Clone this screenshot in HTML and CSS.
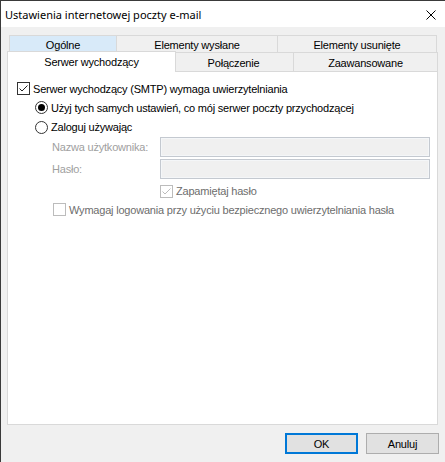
FILE: index.html
```html
<!DOCTYPE html>
<html lang="pl">
<head>
<meta charset="utf-8">
<title>Ustawienia internetowej poczty e-mail</title>
<link rel="stylesheet" href="styles.css">
</head>
<body>
<div class="window">
  <div class="titlebar">
    <span class="title">Ustawienia internetowej poczty e-mail</span>
    <svg class="close" width="10" height="10" viewBox="0 0 10 10"><path d="M0.5 0.5 L9.5 9.5 M9.5 0.5 L0.5 9.5" stroke="#000" stroke-width="1" fill="none"/></svg>
  </div>
  <div class="client">
    <div class="tabs">
      <div class="tabrow row1">
        <div class="tab hover w-ogolne">Ogólne</div>
        <div class="tab w-wyslane">Elementy wysłane</div>
        <div class="tab w-usuniete">Elementy usunięte</div>
      </div>
      <div class="tabrow row2">
        <div class="tab selected w-serwer">Serwer wychodzący</div>
        <div class="tab w-polaczenie">Połączenie</div>
        <div class="tab w-zaaw">Zaawansowane</div>
      </div>
    </div>
    <div class="panel">
      <div class="row r1">
        <span class="cb"><svg width="13" height="13" viewBox="0 0 13 13"><path d="M2.5 6.5 L5 9 L10.5 3.5" stroke="#222" stroke-width="1" fill="none"/></svg></span>
        <span class="lbl">Serwer wychodzący (SMTP) wymaga uwierzytelniania</span>
      </div>
      <div class="row r2 indent-radio">
        <span class="radio on"><span class="dot"></span></span>
        <span class="lbl">Użyj tych samych ustawień, co mój serwer poczty przychodzącej</span>
      </div>
      <div class="row r3 indent-radio">
        <span class="radio"></span>
        <span class="lbl">Zaloguj używając</span>
      </div>
      <div class="row r4 indent-field">
        <span class="flabel">Nazwa użytkownika:</span>
        <span class="input"></span>
      </div>
      <div class="row r5 indent-field">
        <span class="flabel">Hasło:</span>
        <span class="input"></span>
      </div>
      <div class="row r6 indent-remember">
        <span class="cb disabled"><svg width="13" height="13" viewBox="0 0 13 13"><path d="M2.5 6.5 L5 9 L10.5 3.5" stroke="#bcbcbc" stroke-width="1" fill="none"/></svg></span>
        <span class="lbl gray">Zapamiętaj hasło</span>
      </div>
      <div class="row r7 indent-spa">
        <span class="cb disabled"></span>
        <span class="lbl gray">Wymagaj logowania przy użyciu bezpiecznego uwierzytelniania hasła</span>
      </div>
    </div>
    <div class="buttons">
      <div class="btn default">OK</div>
      <div class="btn">Anuluj</div>
    </div>
  </div>
</div>
</body>
</html>
```

FILE: styles.css
```css
html, body {
  margin: 0;
  padding: 0;
  background: #f0f0f0;
}
body {
  font-family: "Liberation Sans", Arial, sans-serif;
  font-size: 11px;
  letter-spacing: -0.2px;
  color: #000;
}
.window {
  width: 445px;
  height: 462px;
  box-sizing: border-box;
  border-left: 1px solid #3a3a3a;
  border-top: 1px solid #3a3a3a;
  background: #f0f0f0;
  overflow: hidden;
}
.titlebar {
  height: 26px;
  background: #fff;
  display: flex;
  align-items: center;
  justify-content: space-between;
  padding: 0 9px 0 4px;
}
.title {
  font-family: "Noto Sans", "Open Sans", sans-serif;
  font-size: 11px;
  letter-spacing: 0;
  color: #000;
}
.close {
  display: block;
  margin-top: 1px;
}
.client {
  padding-top: 8px;
}
.tabs {
  margin-left: 6px;
}
.tabrow {
  display: flex;
  align-items: flex-start;
}
.row1 {
  padding-left: 2px;
}
.row2 {
  padding-left: 2px;
  margin-top: -1px;
}
.tab {
  box-sizing: border-box;
  border: 1px solid #d9d9d9;
  background: #f0f0f0;
  display: flex;
  align-items: center;
  justify-content: center;
  white-space: nowrap;
  margin-left: -1px;
}
.tab:first-child {
  margin-left: 0;
}
.row1 .tab {
  height: 18px;
  padding-top: 1px;
}
.row2 .tab {
  height: 19px;
  border-bottom: none;
  padding-top: 2px;
}
.tab.hover {
  background: #d8eaf9;
}
.row2 .tab.selected {
  position: relative;
  z-index: 1;
  background: #fff;
  height: 21px;
  margin: -1px -2px -1px -2px;
  padding-top: 0;
}
.w-ogolne { width: 108px; }
.w-wyslane { width: 162px; }
.w-usuniete { width: 160px; }
.w-serwer { width: 169px; }
.w-polaczenie { width: 121px; }
.w-zaaw { width: 145px; }

.panel {
  margin-left: 6px;
  width: 431px;
  height: 354px;
  box-sizing: border-box;
  border: 1px solid #d9d9d9;
  background: #fff;
  padding: 7px 0 0 9px;
}
.row {
  display: flex;
  align-items: center;
  white-space: nowrap;
}
.r1 { height: 19px; }
.r2 { height: 19px; }
.r3 { height: 20px; }
.r4 { height: 20px; }
.r5 { height: 20px; margin-top: 2px; }
.r6 { height: 20px; margin-top: 2px; }
.r7 { height: 17px; }

.indent-radio { padding-left: 18px; }
.indent-field { padding-left: 35px; }
.indent-remember { padding-left: 143px; }
.indent-spa { padding-left: 36px; }

.cb {
  width: 13px;
  height: 13px;
  box-sizing: border-box;
  border: 1px solid #333;
  background: #fff;
  flex: none;
  position: relative;
}
.cb svg {
  position: absolute;
  left: -1px;
  top: -1px;
}
.cb.disabled {
  border-color: #bcbcbc;
}
.lbl {
  margin-left: 3px;
}
.lbl.gray {
  color: #6d6d6d;
}
.radio {
  width: 13px;
  height: 13px;
  box-sizing: border-box;
  border: 1px solid #333;
  border-radius: 50%;
  background: #fff;
  flex: none;
  display: flex;
  align-items: center;
  justify-content: center;
}
.radio .dot {
  width: 7px;
  height: 7px;
  border-radius: 50%;
  background: #000;
}
.flabel {
  width: 108px;
  flex: none;
  color: #a0a0a0;
}
.input {
  width: 270px;
  height: 20px;
  box-sizing: border-box;
  border: 1px solid #c4c9d0;
  background: #f0f0f0;
  box-shadow: inset 0 0 0 1px #f4f6f8;
}
.buttons {
  display: flex;
  justify-content: flex-end;
  gap: 8px;
  margin-top: 8px;
  padding-right: 6px;
}
.btn {
  width: 73px;
  height: 21px;
  box-sizing: border-box;
  border: 1px solid #adadad;
  background: #e1e1e1;
  display: flex;
  align-items: center;
  justify-content: center;
}
.btn.default {
  border: 2px solid #0078d7;
}
```
